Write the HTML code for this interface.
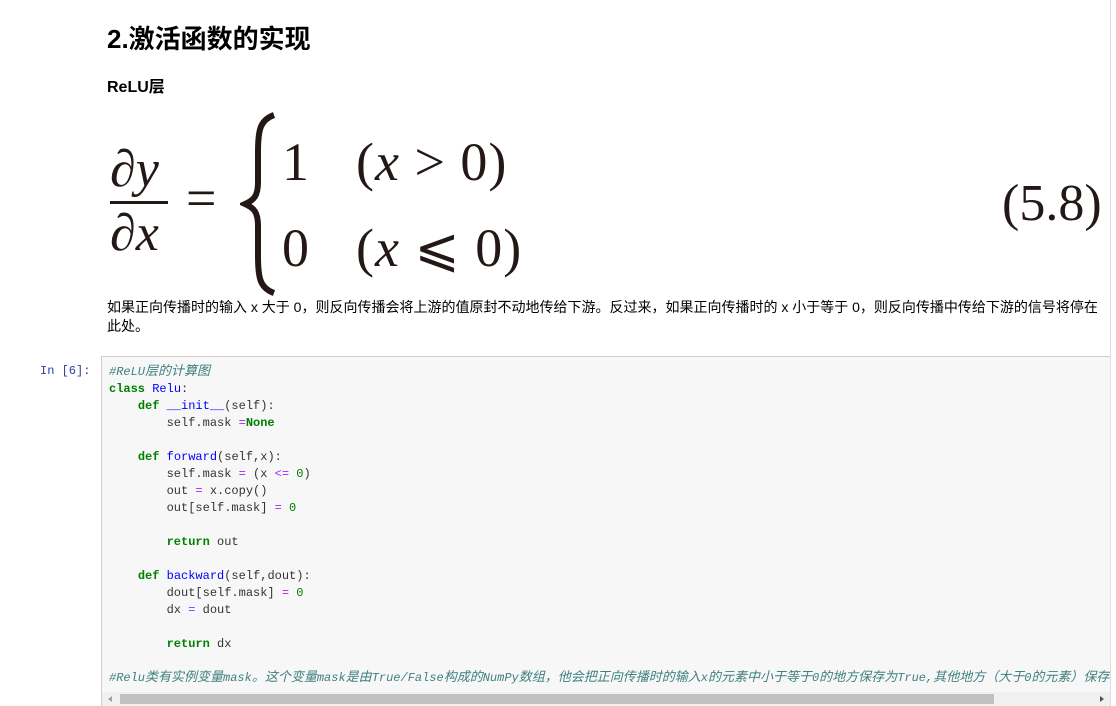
<!DOCTYPE html>
<html><head><meta charset="utf-8"><style>
body{margin:0;width:1116px;height:705px;overflow:hidden;background:#fff;position:relative;font-family:"Liberation Sans","Noto Sans CJK SC",sans-serif;color:#000}
.a{position:absolute;white-space:nowrap}
h2{position:absolute;left:107px;top:22px;margin:0;font-size:26px;font-weight:bold;line-height:34px}
.m{font-family:"Liberation Serif","DejaVu Serif",serif;position:absolute;white-space:nowrap;color:#231815}
.cell{position:absolute;left:101px;top:356px;width:1008px;height:349px;background:#f7f7f7;border:1px solid #cfcfcf;border-bottom:none;overflow:hidden}
pre{margin:0;position:absolute;left:7px;top:7px;font-family:"Liberation Mono","Noto Sans CJK SC",monospace;font-size:12px;line-height:17px;color:#333}
.k{color:#008000;font-weight:bold}.f{color:#0000ff}.o{color:#aa22ff}.n{color:#008000}.c{color:#408080;font-style:italic}
.c b{font-weight:normal;font-size:13px;line-height:10px}
</style></head><body>
<h2>2.激活函数的实现</h2>
<div class="a" style="left:107px;top:78px;font-size:16px;font-weight:bold;line-height:20px">ReLU层</div>

<div class="m" style="left:110px;top:142px;font-size:52px;font-style:italic;line-height:56px">∂y</div>
<div style="position:absolute;left:110px;top:201px;width:58px;height:3px;background:#231815"></div>
<div class="m" style="left:110px;top:206px;font-size:52px;font-style:italic;line-height:56px">∂x</div>
<div class="m" style="left:186px;top:170px;font-size:54px;line-height:56px">=</div>
<svg style="position:absolute;left:240px;top:112px" width="40" height="184" viewBox="0 0 40 184">
<path d="M34 3 C20 8 18 18 18 40 L18 70 C18 84 14 88 5 92 C14 96 18 100 18 114 L18 144 C18 166 20 176 34 181" fill="none" stroke="#231815" stroke-width="6"/>
</svg>
<div class="m" style="left:282px;top:134px;font-size:54px;line-height:56px">1</div>
<div class="m" style="left:356px;top:134px;font-size:54px;line-height:56px;letter-spacing:1px">(<i>x</i> &gt; 0)</div>
<div class="m" style="left:282px;top:220px;font-size:54px;line-height:56px">0</div>
<div class="m" style="left:356px;top:220px;font-size:54px;line-height:56px;letter-spacing:1px">(<i>x</i> ⩽ 0)</div>
<div class="m" style="left:1002px;top:176px;font-size:52px;line-height:56px">(5.8)</div>

<div class="a" style="left:107px;top:298px;font-size:14px;line-height:19px;white-space:normal;width:995px">如果正向传播时的输入 x 大于 0，则反向传播会将上游的值原封不动地传给下游。反过来，如果正向传播时的 x 小于等于 0，则反向传播中传给下游的信号将停在此处。</div>

<div class="a" style="left:40px;top:363px;font-family:'Liberation Mono',monospace;font-size:12px;line-height:17px;color:#303f9f">In [6]:</div>
<div class="cell"><pre><span class="c">#ReLU<b>层的计算图</b></span>
<span class="k">class</span> <span class="f">Relu</span>:
    <span class="k">def</span> <span class="f">__init__</span>(self):
        self.mask <span class="o">=</span><span class="k">None</span>

    <span class="k">def</span> <span class="f">forward</span>(self,x):
        self.mask <span class="o">=</span> (x <span class="o">&lt;=</span> <span class="n">0</span>)
        out <span class="o">=</span> x.copy()
        out[self.mask] <span class="o">=</span> <span class="n">0</span>

        <span class="k">return</span> out

    <span class="k">def</span> <span class="f">backward</span>(self,dout):
        dout[self.mask] <span class="o">=</span> <span class="n">0</span>
        dx <span class="o">=</span> dout

        <span class="k">return</span> dx

<span class="c">#Relu<b>类有实例变量</b>mask<b>。这个变量</b>mask<b>是由</b>True/False<b>构成的</b>NumPy<b>数组，他会把正向传播时的输入</b>x<b>的元素中小于等于</b>0<b>的地方保存为</b>True,<b>其他地方（大于</b>0<b>的元素）保存为</b>False<b>。</b></span></pre>
<div style="position:absolute;left:0;top:335px;width:1008px;height:14px;background:#f0f0f0"></div>
<div style="position:absolute;left:18px;top:337px;width:874px;height:10px;background:#c1c1c1"></div>
<div style="position:absolute;left:6px;top:339px;width:0;height:0;border-top:3px solid transparent;border-bottom:3px solid transparent;border-right:4px solid #a0a0a0"></div>
<div style="position:absolute;left:998px;top:339px;width:0;height:0;border-top:3px solid transparent;border-bottom:3px solid transparent;border-left:4px solid #505050"></div>
</div>
<div style="position:absolute;left:1110px;top:0;width:6px;height:705px;background:#fff;border-left:1px solid #ddd"></div>
</body></html>
